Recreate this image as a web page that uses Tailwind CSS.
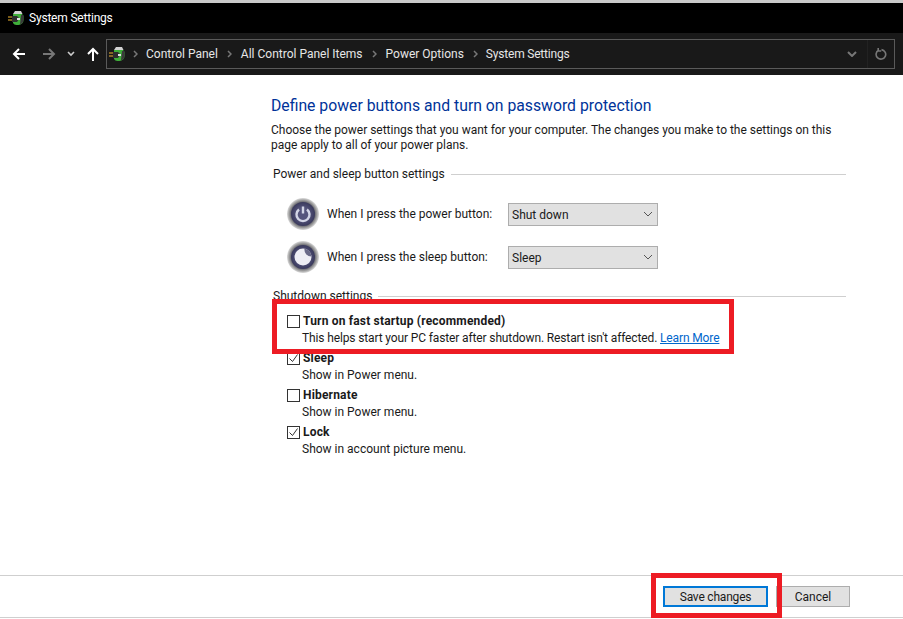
<!DOCTYPE html>
<html lang="en">

<head>
    <meta charset="UTF-8">
    <script src="https://cdn.jsdelivr.net/npm/@tailwindcss/browser@4"></script>
    <title>System Settings</title>
</head>

<body class="relative w-[903px] h-[619px] overflow-hidden bg-white font-['Roboto',sans-serif] text-[12px] leading-[16px] text-[#1a1a1a]">
    <!-- window chrome -->
    <div class="h-[3px] bg-[#c9c9c9]"></div>
    <div class="h-[30px] bg-black flex items-center pl-[8px] gap-[5px] text-white">
        <svg class="w-[16px] h-[16px]" viewBox="0 0 16 16">
            <path d="M5 4h9l1.500 2v4a5 5 0 0 1-5 5H9a4 4 0 0 1-4-2z" fill="#3fae3a" />
            <path d="M5 4 7 1h6l1.500 3z" fill="#d2d2d2" />
            <path d="M13 5h2.500v5a5 5 0 0 1-3.500 4.500z" fill="#3a3a3a" />
            <path d="M4 6h5l2 2v1l-2 3H4z" fill="#2e2e2e" />
            <path d="M9 8h3v2H9z" fill="#e4e4e4" />
            <path d="M0 7h4M0 10h4" stroke="#f2b632" stroke-width="1.200" />
        </svg>
        <span class="tracking-[-0.2px]">System Settings</span>
    </div>
    <div class="h-[42px] bg-[#191919] flex items-center pl-[12px] pr-[8px] text-[#e6e6e6]">
        <svg class="w-[14px] h-[14px]" viewBox="0 0 14 14" fill="none" stroke="#fff" stroke-width="2">
            <path d="M13 7H2M7 2 2 7l5 5" />
        </svg>
        <svg class="w-[14px] h-[14px] ml-[16px]" viewBox="0 0 14 14" fill="none" stroke="#777" stroke-width="2">
            <path d="M1 7h11M7 2l5 5-5 5" />
        </svg>
        <svg class="w-[8px] h-[6px] ml-[11px]" viewBox="0 0 8 6" fill="none" stroke="#ccc" stroke-width="1.6">
            <path d="M1 1l3 3 3-3" />
        </svg>
        <svg class="w-[14px] h-[14px] ml-[11px]" viewBox="0 0 14 14" fill="none" stroke="#fff" stroke-width="2">
            <path d="M7 14V2M2 7l5-5 5 5" />
        </svg>
        <div class="ml-[6px] flex-1 h-[30px] border border-[#5a5a5a] flex items-center pl-[2px]">
            <svg class="w-[16px] h-[16px]" viewBox="0 0 16 16">
                <path d="M5 4h9l1.500 2v4a5 5 0 0 1-5 5H9a4 4 0 0 1-4-2z" fill="#3fae3a" />
                <path d="M5 4 7 1h6l1.500 3z" fill="#d2d2d2" />
                <path d="M13 5h2.500v5a5 5 0 0 1-3.500 4.500z" fill="#3a3a3a" />
                <path d="M4 6h5l2 2v1l-2 3H4z" fill="#2e2e2e" />
                <path d="M9 8h3v2H9z" fill="#e4e4e4" />
                <path d="M0 7h4M0 10h4" stroke="#f2b632" stroke-width="1.200" />
            </svg>
            <svg class="w-[5px] h-[8px] ml-[8px]" viewBox="0 0 5 8" fill="none" stroke="#777" stroke-width="1.5">
                <path d="M1 1l3 3-3 3" />
            </svg>
            <span class="ml-[8px]">Control Panel</span>
            <svg class="w-[5px] h-[8px] ml-[9px]" viewBox="0 0 5 8" fill="none" stroke="#777" stroke-width="1.5">
                <path d="M1 1l3 3-3 3" />
            </svg>
            <span class="ml-[9px]">All Control Panel Items</span>
            <svg class="w-[5px] h-[8px] ml-[9px]" viewBox="0 0 5 8" fill="none" stroke="#777" stroke-width="1.5">
                <path d="M1 1l3 3-3 3" />
            </svg>
            <span class="ml-[9px]">Power Options</span>
            <svg class="w-[5px] h-[8px] ml-[9px]" viewBox="0 0 5 8" fill="none" stroke="#777" stroke-width="1.5">
                <path d="M1 1l3 3-3 3" />
            </svg>
            <span class="ml-[8px] tracking-[-0.2px]">System Settings</span>
            <svg class="w-[10px] h-[6px] ml-auto" viewBox="0 0 10 6" fill="none" stroke="#777" stroke-width="2">
                <path d="M1 1l4 4 4-4" />
            </svg>
            <div class="w-px h-full bg-[#222] ml-[10px]"></div>
            <svg class="w-[12px] h-[12px] mx-[7px]" viewBox="0 0 12 12" fill="none" stroke="#777" stroke-width="1.6">
                <path d="M3.500 2.200a4.800 4.800 0 1 0 3-.6M3.200 0v3h3" />
            </svg>
        </div>
    </div>

    <!-- content -->
    <div class="h-[500px] pl-[271px] pr-[57px] pt-[21px]">
        <h1 class="text-[15.750px] leading-[20px] text-[#003399]">Define power buttons and turn on password protection</h1>
        <p class="mt-[7px] leading-[15px] tracking-[-0.02px]">Choose the power settings that you want for your computer. The changes you make to the settings on this<br>page apply to all of your power plans.</p>

        <div class="mt-[13px] flex items-center gap-[6px] pl-[2px]">
            <span>Power and sleep button settings</span>
            <div class="flex-1 h-px bg-[#cfcfcf]"></div>
        </div>
        <div class="mt-[16px] flex items-center pl-[16px] h-[32px]">
            <svg class="w-[32px] h-[32px]" viewBox="0 0 32 32">
                <defs>
                    <radialGradient id="rim">
                        <stop offset="0.750" stop-color="#6c6c72" />
                        <stop offset="0.870" stop-color="#a2a2a2" />
                        <stop offset="1" stop-color="#dcdcdc" />
                    </radialGradient>
                    <radialGradient id="face">
                        <stop offset="0.500" stop-color="#55557c" />
                        <stop offset="1" stop-color="#3a3a5c" />
                    </radialGradient>
                </defs>
                <circle cx="16" cy="16" r="16" fill="url(#rim)" />
                <circle cx="16" cy="16" r="12" fill="url(#face)" />
                <path d="M12 11.500a6.500 6.500 0 1 0 8 0" fill="none" stroke="#d3d6e6" stroke-width="2.400" />
                <path d="M16 8.500v7" stroke="#d3d6e6" stroke-width="2.400" />
            </svg>
            <span class="ml-[8px] w-[181px]">When I press the power button:</span>
            <div class="w-[150px] h-[23px] bg-[#e1e1e1] border border-[#adadad] flex items-center pl-[3px] pr-[4px] justify-between">
                <span class="pt-[1px]">Shut down</span>
                <svg class="w-[10px] h-[6px]" viewBox="0 0 10 6" fill="none" stroke="#555" stroke-width="1">
                    <path d="M1 1l4 4 4-4" />
                </svg>
            </div>
        </div>
        <div class="mt-[11px] flex items-center pl-[16px] h-[32px]">
            <svg class="w-[32px] h-[32px]" viewBox="0 0 32 32">
                <circle cx="16" cy="16" r="16" fill="url(#rim)" />
                <circle cx="16" cy="16" r="12" fill="url(#face)" />
                <circle cx="16" cy="16" r="8.500" fill="#eeeef4" />
                <path d="M17.500 7.600a8.500 8.500 0 0 1 7 8 7 7 0 0 1-7-8z" fill="#6a6a88" />
            </svg>
            <span class="ml-[8px] w-[181px]">When I press the sleep button:</span>
            <div class="w-[150px] h-[23px] bg-[#e1e1e1] border border-[#adadad] flex items-center pl-[3px] pr-[4px] justify-between">
                <span class="pt-[1px]">Sleep</span>
                <svg class="w-[10px] h-[6px]" viewBox="0 0 10 6" fill="none" stroke="#555" stroke-width="1">
                    <path d="M1 1l4 4 4-4" />
                </svg>
            </div>
        </div>

        <div class="mt-[15px] flex items-center gap-[6px] pl-[2px]">
            <span>Shutdown settings</span>
            <div class="flex-1 h-px bg-[#cfcfcf]"></div>
        </div>
        <div class="mt-[9px] pl-[16px] flex flex-col gap-[4px]">
            <div>
                <div class="flex items-center gap-[3px] h-[16px]">
                    <span class="w-[13px] h-[13px] border border-[#333]"></span>
                    <b class="font-bold tracking-[0.18px]">Turn on fast startup (recommended)</b>
                </div>
                <p class="ml-[15px] mt-[1px] tracking-[-0.13px]">This helps start your PC faster after shutdown. Restart isn't affected. <span class="text-[#0066cc] underline">Learn More</span></p>
            </div>
            <div>
                <div class="flex items-center gap-[3px] h-[16px]">
                    <span class="w-[13px] h-[13px] border border-[#333]">
                        <svg class="w-[11px] h-[11px]" viewBox="0 0 11 11" fill="none" stroke="#333" stroke-width="1">
                            <path d="M1.500 5.500l3 3 5-7" />
                        </svg>
                    </span>
                    <b class="font-bold tracking-[0.18px]">Sleep</b>
                </div>
                <p class="ml-[15px] mt-[1px]">Show in Power menu.</p>
            </div>
            <div>
                <div class="flex items-center gap-[3px] h-[16px]">
                    <span class="w-[13px] h-[13px] border border-[#333]"></span>
                    <b class="font-bold tracking-[0.18px]">Hibernate</b>
                </div>
                <p class="ml-[15px] mt-[1px]">Show in Power menu.</p>
            </div>
            <div>
                <div class="flex items-center gap-[3px] h-[16px]">
                    <span class="w-[13px] h-[13px] border border-[#333]">
                        <svg class="w-[11px] h-[11px]" viewBox="0 0 11 11" fill="none" stroke="#333" stroke-width="1">
                            <path d="M1.500 5.500l3 3 5-7" />
                        </svg>
                    </span>
                    <b class="font-bold tracking-[0.18px]">Lock</b>
                </div>
                <p class="ml-[15px] mt-[1px]">Show in account picture menu.</p>
            </div>
        </div>
    </div>

    <!-- footer -->
    <div class="h-[43px] border-t border-[#cfcfcf] border-b flex items-center justify-end gap-[8px] pr-[53px]">
        <button class="w-[105px] h-[21px] bg-[#e1e1e1] border-2 border-[#0078d7] flex items-center justify-center tracking-[-0.2px]">Save changes</button>
        <button class="w-[74px] h-[21px] bg-[#e1e1e1] border border-[#adadad] flex items-center justify-center">Cancel</button>
    </div>

    <!-- red highlight boxes drawn over the screenshot -->
    <div class="absolute left-[272px] top-[299px] w-[462px] h-[55px] border-[5px] border-[#ed1c24]"></div>
    <div class="absolute left-[651px] top-[573px] w-[131px] h-[45px] border-[5px] border-[#ed1c24]"></div>
</body>

</html>
